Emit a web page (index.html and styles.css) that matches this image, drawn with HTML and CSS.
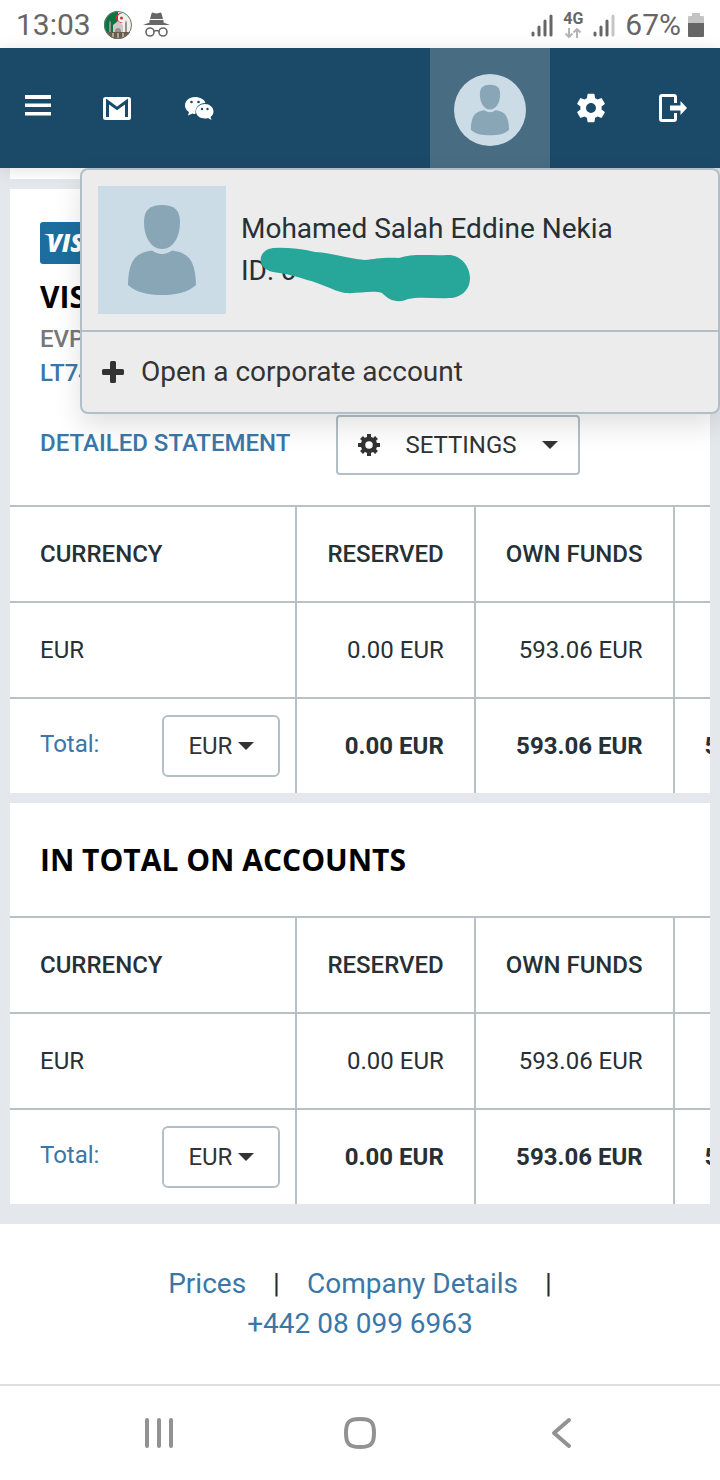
FILE: index.html
```html
<!DOCTYPE html>
<html lang="en">
<head>
<meta charset="utf-8">
<meta name="viewport" content="width=device-width, initial-scale=1">
<title>Accounts</title>
<link rel="stylesheet" href="styles.css">
</head>
<body>
<svg class="defs" aria-hidden="true">
  <symbol id="person" viewBox="0 0 128 128">
    <rect width="128" height="128" fill="#cbdce7"/>
    <path fill="#89a6b7" d="M64 19c12 0 18 5 18 17 0 15-7 27-18 27s-18-12-18-27c0-12 6-17 18-17z"/>
    <path fill="#89a6b7" d="M54 64.500c6 4.500 14 4.500 20 0 15 2 23.500 8 24 34.500-8 7.500-20 10-34 10s-26-2.500-34-10c.5-26.500 9-32.500 24-34.500z"/>
  </symbol>
  <symbol id="caret" viewBox="0 0 16 8"><path d="M0 0h16L8 8z" fill="#333"/></symbol>
</svg>

<div class="status">
  <span class="clock">13:03</span>
  <svg class="flag" viewBox="0 0 28 28" aria-hidden="true">
    <defs><clipPath id="disc"><circle cx="14" cy="14" r="14"/></clipPath></defs>
    <g clip-path="url(#disc)">
      <path fill="#0b7440" d="M0 0h14v28H0z"/><path fill="#f1efed" d="M14 0h14v28H14z"/>
      <path d="M19 2.500a5 5 0 1 0 0 9 4.600 4.600 0 1 1 0-9z" fill="#d42b35"/>
      <circle cx="17.500" cy="7" r="1.500" fill="#d42b35"/>
      <path fill="#cfc8c4" d="M9 22v-8l5-4 5 4v8z"/>
      <path fill="#98918c" d="M6 9l1 3v10H5V12zM22 9l1 3v10h-2V12zM11 20c0-4 6-4 6 0v2h-6z"/>
      <path fill="#675c4d" d="M2 21h24v2l-6 5H8z"/><path fill="#b3a48d" d="M8 22h2v4H8zM13 22h2v5h-2zM18 22h2v4h-2z"/>
    </g>
    <circle cx="14" cy="14" r="13.500" fill="none" stroke="#66786b"/>
  </svg>
  <svg class="incognito" viewBox="0 0 27 26" aria-hidden="true">
    <path fill="#666" d="M8.500 1.500Q9 0 11 1l2.500.6L16 1q2-1 2.500.5L20 7H7zM6.500 8h14v2.500L27 13H0l6.500-2.500z"/>
    <g fill="none" stroke="#666" stroke-width="1.600"><circle cx="7" cy="20" r="4"/><circle cx="20" cy="20" r="4"/><path d="M11 19.500q2.500-2 5 0"/></g>
  </svg>
  <div class="status-right">
    <svg width="24" height="24" viewBox="0 0 24 24" fill="none" stroke="#666" stroke-width="3" stroke-linecap="round" aria-hidden="true"><path d="M3 20v2M9 14v8M15 8v14M21 3v19"/></svg>
    <span class="network">4G<svg width="18" height="10" viewBox="0 0 18 10" fill="none" stroke="#b5b5b5" stroke-width="2" aria-hidden="true"><path d="M5 0v9M1.500 5.500L5 9l3.500-3.500M13 10V1M9.500 4.500L13 1l3.500 3.500"/></svg></span>
    <svg width="24" height="24" viewBox="0 0 24 24" fill="none" stroke="#666" stroke-width="3" stroke-linecap="round" aria-hidden="true"><path d="M3 20v2M9 14v8M15 8v14"/><path stroke="#c5c5c5" d="M21 3v19"/></svg>
    <span class="charge">67%</span>
    <svg class="battery" width="16" height="24" viewBox="0 0 16 24" aria-hidden="true"><path fill="#c4c4c4" d="M4 0h8v3h3q1 0 1 1v7H0V4q0-1 1-1h3z"/><path fill="#666" d="M0 10h16v13q0 1-1 1H1q-1 0-1-1z"/></svg>
  </div>
</div>

<header class="topbar">
  <button class="tool tool-menu" aria-label="Menu"><svg width="28" height="28" viewBox="0 0 28 28" fill="#fff"><path d="M1 1h26v4H1zM1 9.500h26v3.500H1zM1 18h26v3.500H1z"/></svg></button>
  <button class="tool" aria-label="Messages"><svg width="28" height="28" viewBox="0 0 28 28"><rect y="3" width="28" height="23" rx="2.500" fill="#fff"/><path d="M4.500 23V7.500L14 14.500l9.500-7V23" fill="none" stroke="#1b4a69" stroke-width="3"/></svg></button>
  <button class="tool" aria-label="Chat"><svg width="30" height="28" viewBox="0 0 30 28"><path fill="#fff" d="M11 3C5 3 1 7 1 11.500c0 3 1.500 5 4 6.500l-1 3.500 4.500-2q1.500.5 3 .5C11 13 15 9 21.500 9 20.500 5.500 16 3 11 3z"/><path fill="#fff" d="M21 10c-5 0-9 3.300-9 7.500s4 7 9 7q1.500 0 3-.5l3.500 2-1-3c2-1.500 3-3.500 3-5.500 0-4.200-4-7.500-8.500-7.500z"/><g fill="#1b4a69"><circle cx="7.500" cy="8" r="1.300"/><circle cx="14.500" cy="8" r="1.300"/><circle cx="18" cy="15" r="1.200"/><circle cx="23.500" cy="15" r="1.200"/></g></svg></button>
  <button class="profile" aria-label="Profile" aria-expanded="true"><svg class="avatar-round"><use href="#person"/></svg></button>
  <button class="tool" aria-label="Preferences"><svg width="34" height="34" viewBox="0 0 24 24"><path fill="#fff" d="M19.430 12.980c.04-.32.070-.64.070-.98s-.03-.66-.07-.98l2.110-1.650c.19-.15.240-.42.120-.64l-2-3.460c-.12-.22-.39-.3-.61-.22l-2.490 1c-.52-.4-1.080-.73-1.690-.98l-.38-2.650C14.460 2.180 14.250 2 14 2h-4c-.25 0-.46.180-.49.420l-.38 2.650c-.61.250-1.170.590-1.690.980l-2.490-1c-.23-.09-.49 0-.61.220l-2 3.460c-.13.220-.07.490.120.640l2.110 1.650c-.04.320-.07.650-.07.980s.03.660.070.980l-2.110 1.650c-.19.150-.24.420-.12.640l2 3.460c.12.220.39.300.61.220l2.490-1c.52.400 1.080.730 1.690.980l.38 2.650c.03.240.240.420.490.420h4c.25 0 .46-.18.490-.42l.38-2.650c.61-.25 1.170-.59 1.690-.98l2.490 1c.23.090.490 0 .61-.22l2-3.460c.12-.22.070-.49-.12-.64l-2.110-1.650zM12 15.500c-1.930 0-3.500-1.570-3.500-3.500s1.570-3.500 3.500-3.500 3.500 1.570 3.500 3.500-1.570 3.500-3.500 3.500z"/></svg></button>
  <button class="tool" aria-label="Log out"><svg width="28" height="28" viewBox="0 0 28 28"><path d="M16.500 9V3q0-1.500-1.500-1.500H3Q1.500 1.500 1.500 3v22q0 1.500 1.500 1.500h12q1.500 0 1.500-1.500v-6" fill="none" stroke="#fff" stroke-width="3"/><path d="M11 11.500h10.500V7L28 14l-6.500 7v-4.500H11z" fill="#fff"/></svg></button>

  <div class="menu">
    <div class="menu-user">
      <svg class="avatar-square" aria-hidden="true"><use href="#person"/></svg>
      <div class="menu-text">
        <div>Mohamed Salah Eddine Nekia</div>
        <div class="user-id">ID: 0
          <svg class="scribble" width="212" height="56" viewBox="0 0 212 56" aria-hidden="true"><path fill="#27a69a" d="M14 1Q34 0 56 5C74 6 90 12 106 13C116 12 124 10 140 11C154 6 172 9 188 8C200 7 211 18 211 31C211 43 202 51 190 51C176 52 162 49 149 52C138 57 130 53 123 46C112 43 100 47 86 46C72 43 62 36 48 33C36 29 28 27 14 25C-3 22-2 3 14 1z"/></svg>
        </div>
      </div>
    </div>
    <a class="menu-link" href="#corporate"><svg width="22" height="22" viewBox="0 0 22 22" aria-hidden="true"><path fill="#333" d="M9.500 0h3q1.500 0 1.500 1.500V8h6.500Q22 8 22 9.500v3q0 1.500-1.500 1.500H14v6.500q0 1.500-1.500 1.500h-3Q8 22 8 20.500V14H1.500Q0 14 0 12.500v-3Q0 8 1.500 8H8V1.500Q8 0 9.500 0z"/></svg>Open a corporate account</a>
  </div>
</header>

<main>
  <div class="card card-end"></div>
  <section class="card">
    <div class="account">
      <svg class="visa" width="66" height="42" viewBox="0 0 66 42" role="img" aria-label="Visa"><rect width="66" height="42" rx="3" fill="#1d6e9e"/><path d="M4 12h6q3 0 4 7-3-5-10-7z" fill="#fff"/><text x="7" y="30" class="visa-word">VISA</text></svg>
      <h2 class="account-title">VISA</h2>
      <div class="account-line">EVP</div>
      <div class="account-line"><a href="#iban">LT74</a></div>
      <div class="actions">
        <a class="statement" href="#statement">DETAILED STATEMENT</a>
        <button class="settings"><svg width="22" height="22" viewBox="0 0 22 22" aria-hidden="true"><g fill="none" stroke="#333"><circle cx="11" cy="11" r="6" stroke-width="4.500"/><path stroke-width="4" d="M11 0v5M11 17v5M0 11h5M17 11h5M3.500 3.500L7 7M15 15l3.500 3.500M18.500 3.500L15 7M7 15l-3.500 3.500"/></g></svg>SETTINGS<svg width="16" height="8" aria-hidden="true"><use href="#caret"/></svg></button>
      </div>
    </div>
    <div class="table-wrap">
      <table>
        <thead><tr><th>CURRENCY</th><th>RESERVED</th><th>OWN FUNDS</th><td></td></tr></thead>
        <tbody><tr><td>EUR</td><td>0.00 EUR</td><td>593.06 EUR</td><td></td></tr></tbody>
        <tfoot><tr><td><div class="total"><label for="cur1">Total:</label><span class="currency"><select id="cur1"><option>EUR</option></select><svg width="16" height="8" aria-hidden="true"><use href="#caret"/></svg></span></div></td><td>0.00 EUR</td><td>593.06 EUR</td><td>593.06 EUR</td></tr></tfoot>
      </table>
    </div>
  </section>
  <section class="card">
    <h2 class="card-title">IN TOTAL ON ACCOUNTS</h2>
    <div class="table-wrap">
      <table>
        <thead><tr><th>CURRENCY</th><th>RESERVED</th><th>OWN FUNDS</th><td></td></tr></thead>
        <tbody><tr><td>EUR</td><td>0.00 EUR</td><td>593.06 EUR</td><td></td></tr></tbody>
        <tfoot><tr><td><div class="total"><label for="cur2">Total:</label><span class="currency"><select id="cur2"><option>EUR</option></select><svg width="16" height="8" aria-hidden="true"><use href="#caret"/></svg></span></div></td><td>0.00 EUR</td><td>593.06 EUR</td><td>593.06 EUR</td></tr></tfoot>
      </table>
    </div>
  </section>
</main>

<footer class="footer">
  <div class="footer-row"><a href="#prices">Prices</a><span>|</span><a href="#company">Company Details</a><span>|</span></div>
  <div class="footer-row"><a href="tel:+442080996963">+442 08 099 6963</a></div>
</footer>

<nav class="system" aria-label="System">
  <button aria-label="Recent apps"><svg width="32" height="32" viewBox="0 0 32 32"><path d="M4 3v26M16 3v26M28 3v26"/></svg></button>
  <button aria-label="Home"><svg width="32" height="32" viewBox="0 0 32 32"><path d="M16 2C27 2 30 5 30 16S27 30 16 30 2 27 2 16 5 2 16 2z"/></svg></button>
  <button aria-label="Back"><svg width="32" height="32" viewBox="0 0 32 32"><path d="M24 3L9 16l15 13"/></svg></button>
</nav>
</body>
</html>
```

FILE: styles.css
```css
* { box-sizing: border-box; }
body {
  margin: 0;
  background: #fff;
  color: #263035;
  font-family: Roboto, "Liberation Sans", sans-serif;
  font-size: 24px;
}
button, select { font: inherit; color: inherit; background: none; border: 0; padding: 0; margin: 0; }
a, label { color: #3a77a8; text-decoration: none; }
svg { flex: none; }
h2 { margin: 0; font-family: "Open Sans", sans-serif; font-size: 30px; font-weight: 700; line-height: 40px; color: #000; }
.defs { position: absolute; width: 0; height: 0; }

.status { display: flex; align-items: center; height: 48px; padding: 2px 16px 0; color: #666; }
.clock, .charge { font-size: 30px; line-height: 46px; }
.flag { width: 28px; height: 28px; margin: 0 11px 0 13px; }
.incognito { width: 27px; height: 26px; }
.status-right { display: flex; align-items: center; gap: 9px; margin-left: auto; }
.battery { margin-left: -2px; }
.network { display: flex; flex-direction: column; align-items: center; gap: 2px; font-size: 16px; font-weight: 700; line-height: 14px; }

.topbar { position: relative; z-index: 1; display: flex; align-items: center; height: 120px; padding-right: 6px; background: #1b4a69; box-shadow: 0 2px 16px rgba(0, 0, 0, .12); }
.tool { display: flex; align-items: center; justify-content: center; width: 82px; height: 120px; }
.tool-menu { width: 76px; }
.profile { display: flex; align-items: center; justify-content: center; width: 120px; height: 120px; margin-left: auto; padding-top: 4px; background: #486d83; }
.avatar-round { width: 72px; height: 72px; border-radius: 50%; }

.menu { position: absolute; top: 100%; left: 80px; right: 0; background: #ececec; border: 2px solid #b3bfc6; border-radius: 8px; box-shadow: 0 12px 28px rgba(0, 0, 0, .12); font-size: 28px; }
.menu-user { display: flex; align-items: center; gap: 15px; padding: 16px; border-bottom: 2px solid #b3bfc6; }
.avatar-square { width: 128px; height: 128px; }
.menu-text { line-height: 42px; }
.user-id { position: relative; }
.scribble { position: absolute; left: 18px; top: -3px; }
.menu-link { display: flex; align-items: center; gap: 17px; padding: 0 20px; line-height: 80px; color: #333; }

main { display: flex; flex-direction: column; gap: 10px; padding: 0 10px 20px; background: #e4e7eb; }
.card { background: #fff; }
.card-end { height: 11px; }
.account { padding: 33px 30px 30px; }
.visa { display: block; margin-bottom: 13px; }
.visa-word { font: italic 800 24px "Open Sans", sans-serif; fill: #fff; }
.account-title { margin-bottom: 5px; }
.account-line { line-height: 34px; color: #777; font-weight: 500; }
.actions { display: flex; align-items: center; gap: 46px; margin-top: 25px; }
.statement { padding-bottom: 4px; font-weight: 500; }
.settings { display: flex; align-items: center; gap: 25px; height: 60px; padding: 0 20px; border: 2px solid #b3bfc6; border-radius: 4px; color: #333; }
.card-title { padding: 37px 30px 36px; }

.table-wrap { overflow: hidden; }
table { border-collapse: separate; border-spacing: 0; white-space: nowrap; line-height: 28px; }
th, td { height: 96px; padding: 0 30px; border-top: 2px solid #b8c2c6; border-right: 2px solid #b8c2c6; text-align: right; }
th { font-weight: 500; }
th:first-child, td:first-child { text-align: left; }
tfoot td { font-weight: 700; }
tfoot td:first-child { padding-right: 15px; font-weight: 400; }
.total { display: flex; align-items: center; gap: 63px; }
.total label { padding-bottom: 4px; }
.currency { display: flex; align-items: center; gap: 6px; height: 62px; padding: 0 24px; border: 2px solid #b3bfc6; border-radius: 6px; color: #333; }
.currency select { appearance: none; }

.footer { padding: 40px 20px; font-size: 28px; line-height: 40px; }
.footer-row { display: flex; justify-content: center; gap: 27px; }
.system { display: grid; grid-template-columns: repeat(3, 1fr); align-items: center; height: 96px; padding: 0 58px; border-top: 2px solid #dedede; }
.system button { display: flex; justify-content: center; }
.system svg { fill: none; stroke: #929292; stroke-width: 4; stroke-linecap: round; stroke-linejoin: round; }
```
